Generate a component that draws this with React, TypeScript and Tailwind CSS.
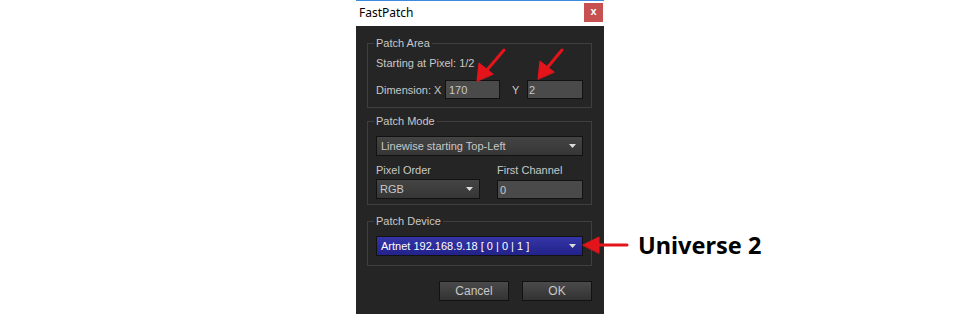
import React from "react";

const font = { fontFamily: '"Liberation Sans", Arial, sans-serif' };

function Arrow() {
  return (
    <svg width="7" height="4" viewBox="0 0 7 4">
      <polygon points="0,0 7,0 3.5,4" fill="#dcdcdc" />
    </svg>
  );
}

function Group({ title, className, children }: { title: string; className?: string; children: React.ReactNode }) {
  return (
    <div className={"relative border border-[#3f3f3f] px-[8px] " + (className ?? "")}>
      <span className="absolute -top-[8px] left-[6px] bg-[#252525] px-[2px] text-[11px] leading-[14px] text-[#c8c8c8]">
        {title}
      </span>
      {children}
    </div>
  );
}

export default function App() {
  return (
    <div className="relative w-[960px] h-[314px] bg-white overflow-hidden flex" style={font}>
      <div className="ml-[356px] w-[248px] h-[314px] flex flex-col border-t border-[#3a8be0]">
        {/* title bar */}
        <div className="h-[25px] bg-white flex items-start justify-between">
          <span
            className="ml-[3px] mt-[5px] text-[12px] leading-[14px] text-black"
            style={{ fontFamily: '"Noto Sans", sans-serif' }}
          >
            FastPatch
          </span>
          <div className="mt-[2px] mr-[1px] w-[19px] h-[19px] bg-[#c75050] flex items-center justify-center text-white text-[11px] font-bold leading-none pb-[2px]">
            x
          </div>
        </div>
        {/* body */}
        <div className="flex-1 bg-[#252525] pl-[11px] pr-[12px] pt-[17px] flex flex-col text-[11px] text-[#c8c8c8]">
          <Group title="Patch Area" className="pt-[12px] pb-[8px]">
            <div className="h-[14px] leading-[14px]">Starting at Pixel: 1/2</div>
            <div className="mt-[10px] h-[19px] flex items-center">
              <span className="w-[69px] leading-[14px]">Dimension: X</span>
              <div className="w-[55px] h-[19px] bg-[#4a4a4a] border border-[#121212] pl-[3px] flex items-center leading-[14px]">
                170
              </div>
              <span className="ml-[12px] w-[15px] leading-[14px]">Y</span>
              <div className="w-[56px] h-[19px] bg-[#4a4a4a] border border-[#121212] pl-[1px] flex items-center leading-[14px]">
                2
              </div>
            </div>
          </Group>

          <Group title="Patch Mode" className="mt-[13px] pt-[14px] pb-[5px]">
            <div className="h-[20px] bg-gradient-to-b from-[#444444] to-[#363636] border border-[#121212] pl-[4px] pr-[6px] flex items-center justify-between leading-[14px]">
              <span>Linewise starting Top-Left</span>
              <Arrow />
            </div>
            <div className="mt-[7px] flex h-[14px] leading-[14px]">
              <span className="w-[121px]">Pixel Order</span>
              <span>First Channel</span>
            </div>
            <div className="mt-[2px] flex h-[20px]">
              <div className="w-[104px] h-[20px] bg-gradient-to-b from-[#444444] to-[#363636] border border-[#121212] pl-[3px] pr-[6px] flex items-center justify-between leading-[14px]">
                <span>RGB</span>
                <Arrow />
              </div>
              <div className="ml-[17px] w-[86px] h-[19px] mt-[1px] bg-[#4a4a4a] border border-[#121212] pl-[2px] flex items-center leading-[14px]">
                0
              </div>
            </div>
          </Group>

          <Group title="Patch Device" className="mt-[16px] pt-[14px] pb-[9px]">
            <div className="h-[20px] bg-gradient-to-b from-[#3535a8] to-[#22228a] border border-[#121212] pl-[4px] pr-[6px] flex items-center justify-between leading-[14px] text-white">
              <span>Artnet 192.168.9.18 [ 0 | 0 | 1 ]</span>
              <Arrow />
            </div>
          </Group>

          <div className="mt-[15px] flex justify-end gap-[13px]">
            <div className="w-[70px] h-[20px] bg-gradient-to-b from-[#4a4a4a] to-[#333333] border border-[#121212] flex items-center justify-center leading-[14px] text-[12px]">
              Cancel
            </div>
            <div className="w-[70px] h-[20px] bg-gradient-to-b from-[#4a4a4a] to-[#333333] border border-[#121212] flex items-center justify-center leading-[14px] text-[12px]">
              OK
            </div>
          </div>
        </div>
      </div>

      {/* annotations */}
      <svg className="absolute left-0 top-0 pointer-events-none" width="960" height="314" viewBox="0 0 960 314">
        <g fill="#e5141b" stroke="#e5141b" strokeWidth="3" strokeLinecap="round">
          <line x1="504" y1="50" x2="487" y2="70" />
          <polygon points="477,81 479,63 493,74" strokeWidth="1" />
          <line x1="562" y1="50" x2="547" y2="68" />
          <polygon points="538,79 540,61 554,72" strokeWidth="1" />
          <line x1="627" y1="245" x2="598" y2="245" />
          <polygon points="583,245 599,237 599,253" strokeWidth="1" />
        </g>
      </svg>
      <span
        className="absolute left-[638px] top-[229px] text-[23.5px] leading-[32px] font-bold text-black"
        style={{ fontFamily: '"Noto Sans", sans-serif' }}
      >
        Universe 2
      </span>
    </div>
  );
}
